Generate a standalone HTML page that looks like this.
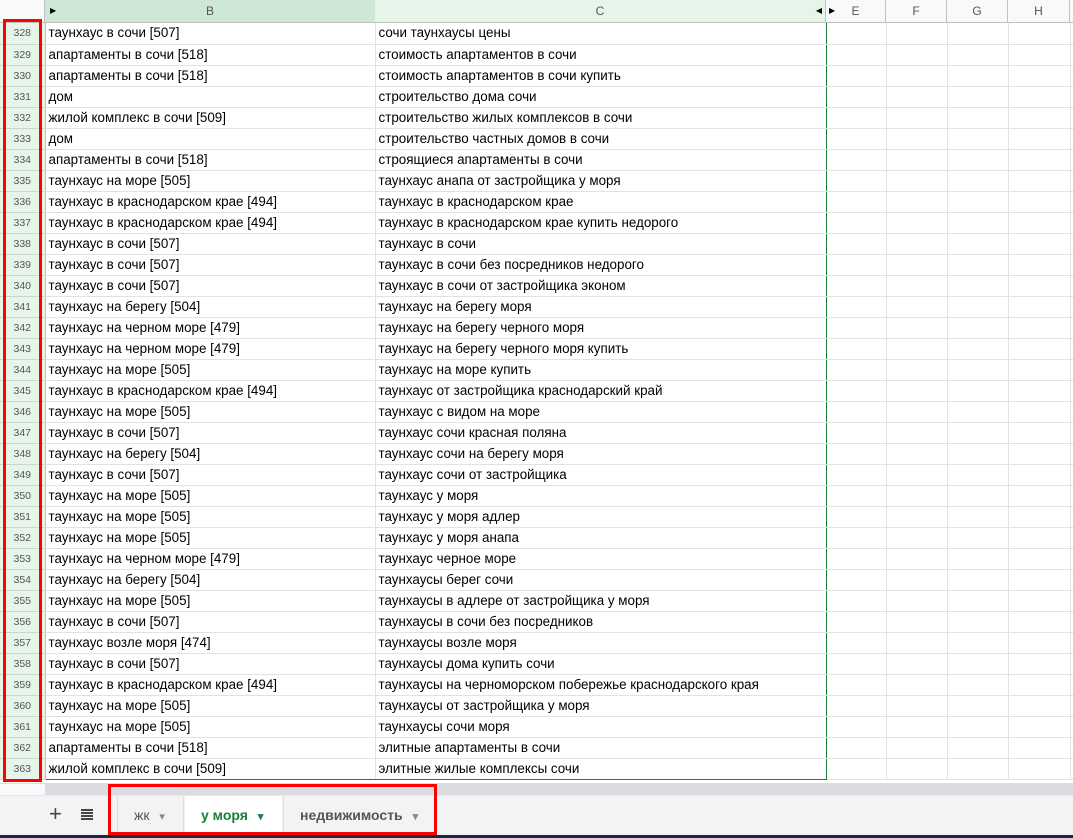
<!DOCTYPE html>
<html><head><meta charset="utf-8"><style>
*{margin:0;padding:0;box-sizing:border-box}
body{width:1073px;height:838px;overflow:hidden;background:#fff;font-family:"Liberation Sans",Arial,sans-serif;position:relative}
.hdr{position:absolute;top:0;height:23px;border-bottom:1px solid #c0c0c0;border-right:1px solid #c0c0c0;background:#f8f9fa;font-size:12px;color:#555;text-align:center;line-height:22px}
table{position:absolute;left:0;top:23px;border-collapse:collapse;table-layout:fixed;width:1080px}
td{height:21px;border-right:1px solid #e2e2e2;border-bottom:1px solid #e2e2e2;font-size:13.4px;color:#000;padding:0 3px;white-space:nowrap;overflow:hidden;line-height:20px}
td.n{background:#e6f4ea;color:#555;font-size:10.5px;text-align:center;border-right:1px solid #c0c0c0;border-bottom:1px solid #c8d8cc}
td.c{border-right:1px solid #188038}
tr.last td.b,tr.last td.c{border-bottom:1px solid #188038}
</style></head><body>
<div class="hdr" style="left:0;width:45px;background:#f8f9fa"></div>
<div class="hdr" style="left:45px;width:331px;background:#cfe7d6">B<span style="position:absolute;left:5px;top:0;font-size:8px;color:#000">▶</span></div>
<div class="hdr" style="left:375px;width:451px;background:#e6f4ea">C<span style="position:absolute;right:3px;top:0;font-size:8px;color:#000">◀</span></div>
<div class="hdr" style="left:826px;width:60px">E<span style="position:absolute;left:3px;top:0;font-size:8px;color:#000">▶</span></div>
<div class="hdr" style="left:886px;width:61px">F</div>
<div class="hdr" style="left:947px;width:61px">G</div>
<div class="hdr" style="left:1008px;width:62px">H</div>
<div class="hdr" style="left:1070px;width:10px"></div>
<table>
<colgroup><col style="width:45px"><col style="width:330px"><col style="width:451px"><col style="width:60px"><col style="width:61px"><col style="width:61px"><col style="width:62px"><col style="width:10px"></colgroup>
<tr><td class="n">328</td><td class="b">таунхаус в сочи [507]</td><td class="c">сочи таунхаусы цены</td><td></td><td></td><td></td><td></td><td></td></tr>
<tr><td class="n">329</td><td class="b">апартаменты в сочи [518]</td><td class="c">стоимость апартаментов в сочи</td><td></td><td></td><td></td><td></td><td></td></tr>
<tr><td class="n">330</td><td class="b">апартаменты в сочи [518]</td><td class="c">стоимость апартаментов в сочи купить</td><td></td><td></td><td></td><td></td><td></td></tr>
<tr><td class="n">331</td><td class="b">дом</td><td class="c">строительство дома сочи</td><td></td><td></td><td></td><td></td><td></td></tr>
<tr><td class="n">332</td><td class="b">жилой комплекс в сочи [509]</td><td class="c">строительство жилых комплексов в сочи</td><td></td><td></td><td></td><td></td><td></td></tr>
<tr><td class="n">333</td><td class="b">дом</td><td class="c">строительство частных домов в сочи</td><td></td><td></td><td></td><td></td><td></td></tr>
<tr><td class="n">334</td><td class="b">апартаменты в сочи [518]</td><td class="c">строящиеся апартаменты в сочи</td><td></td><td></td><td></td><td></td><td></td></tr>
<tr><td class="n">335</td><td class="b">таунхаус на море [505]</td><td class="c">таунхаус анапа от застройщика у моря</td><td></td><td></td><td></td><td></td><td></td></tr>
<tr><td class="n">336</td><td class="b">таунхаус в краснодарском крае [494]</td><td class="c">таунхаус в краснодарском крае</td><td></td><td></td><td></td><td></td><td></td></tr>
<tr><td class="n">337</td><td class="b">таунхаус в краснодарском крае [494]</td><td class="c">таунхаус в краснодарском крае купить недорого</td><td></td><td></td><td></td><td></td><td></td></tr>
<tr><td class="n">338</td><td class="b">таунхаус в сочи [507]</td><td class="c">таунхаус в сочи</td><td></td><td></td><td></td><td></td><td></td></tr>
<tr><td class="n">339</td><td class="b">таунхаус в сочи [507]</td><td class="c">таунхаус в сочи без посредников недорого</td><td></td><td></td><td></td><td></td><td></td></tr>
<tr><td class="n">340</td><td class="b">таунхаус в сочи [507]</td><td class="c">таунхаус в сочи от застройщика эконом</td><td></td><td></td><td></td><td></td><td></td></tr>
<tr><td class="n">341</td><td class="b">таунхаус на берегу [504]</td><td class="c">таунхаус на берегу моря</td><td></td><td></td><td></td><td></td><td></td></tr>
<tr><td class="n">342</td><td class="b">таунхаус на черном море [479]</td><td class="c">таунхаус на берегу черного моря</td><td></td><td></td><td></td><td></td><td></td></tr>
<tr><td class="n">343</td><td class="b">таунхаус на черном море [479]</td><td class="c">таунхаус на берегу черного моря купить</td><td></td><td></td><td></td><td></td><td></td></tr>
<tr><td class="n">344</td><td class="b">таунхаус на море [505]</td><td class="c">таунхаус на море купить</td><td></td><td></td><td></td><td></td><td></td></tr>
<tr><td class="n">345</td><td class="b">таунхаус в краснодарском крае [494]</td><td class="c">таунхаус от застройщика краснодарский край</td><td></td><td></td><td></td><td></td><td></td></tr>
<tr><td class="n">346</td><td class="b">таунхаус на море [505]</td><td class="c">таунхаус с видом на море</td><td></td><td></td><td></td><td></td><td></td></tr>
<tr><td class="n">347</td><td class="b">таунхаус в сочи [507]</td><td class="c">таунхаус сочи красная поляна</td><td></td><td></td><td></td><td></td><td></td></tr>
<tr><td class="n">348</td><td class="b">таунхаус на берегу [504]</td><td class="c">таунхаус сочи на берегу моря</td><td></td><td></td><td></td><td></td><td></td></tr>
<tr><td class="n">349</td><td class="b">таунхаус в сочи [507]</td><td class="c">таунхаус сочи от застройщика</td><td></td><td></td><td></td><td></td><td></td></tr>
<tr><td class="n">350</td><td class="b">таунхаус на море [505]</td><td class="c">таунхаус у моря</td><td></td><td></td><td></td><td></td><td></td></tr>
<tr><td class="n">351</td><td class="b">таунхаус на море [505]</td><td class="c">таунхаус у моря адлер</td><td></td><td></td><td></td><td></td><td></td></tr>
<tr><td class="n">352</td><td class="b">таунхаус на море [505]</td><td class="c">таунхаус у моря анапа</td><td></td><td></td><td></td><td></td><td></td></tr>
<tr><td class="n">353</td><td class="b">таунхаус на черном море [479]</td><td class="c">таунхаус черное море</td><td></td><td></td><td></td><td></td><td></td></tr>
<tr><td class="n">354</td><td class="b">таунхаус на берегу [504]</td><td class="c">таунхаусы берег сочи</td><td></td><td></td><td></td><td></td><td></td></tr>
<tr><td class="n">355</td><td class="b">таунхаус на море [505]</td><td class="c">таунхаусы в адлере от застройщика у моря</td><td></td><td></td><td></td><td></td><td></td></tr>
<tr><td class="n">356</td><td class="b">таунхаус в сочи [507]</td><td class="c">таунхаусы в сочи без посредников</td><td></td><td></td><td></td><td></td><td></td></tr>
<tr><td class="n">357</td><td class="b">таунхаус возле моря [474]</td><td class="c">таунхаусы возле моря</td><td></td><td></td><td></td><td></td><td></td></tr>
<tr><td class="n">358</td><td class="b">таунхаус в сочи [507]</td><td class="c">таунхаусы дома купить сочи</td><td></td><td></td><td></td><td></td><td></td></tr>
<tr><td class="n">359</td><td class="b">таунхаус в краснодарском крае [494]</td><td class="c">таунхаусы на черноморском побережье краснодарского края</td><td></td><td></td><td></td><td></td><td></td></tr>
<tr><td class="n">360</td><td class="b">таунхаус на море [505]</td><td class="c">таунхаусы от застройщика у моря</td><td></td><td></td><td></td><td></td><td></td></tr>
<tr><td class="n">361</td><td class="b">таунхаус на море [505]</td><td class="c">таунхаусы сочи моря</td><td></td><td></td><td></td><td></td><td></td></tr>
<tr><td class="n">362</td><td class="b">апартаменты в сочи [518]</td><td class="c">элитные апартаменты в сочи</td><td></td><td></td><td></td><td></td><td></td></tr>
<tr class="last"><td class="n">363</td><td class="b">жилой комплекс в сочи [509]</td><td class="c">элитные жилые комплексы сочи</td><td></td><td></td><td></td><td></td><td></td></tr>
</table>
<div style="position:absolute;left:0;top:780px;width:1073px;height:4px;background:#fff;border-bottom:1px solid #ddd"></div>
<div style="position:absolute;left:46px;top:784px;width:1027px;height:11px;background:#dadce0"></div>
<div style="position:absolute;left:0;top:784px;width:46px;height:11px;background:#f8f9fa;border-right:1px solid #ddd"></div>
<div style="position:absolute;left:0;top:795px;width:1073px;height:40px;background:#f1f3f4;border-top:1px solid #e8e8e8"></div>
<div style="position:absolute;left:0;top:835px;width:1073px;height:3px;background:#152a45"></div>
<div style="position:absolute;left:49px;top:801px;font-size:22px;color:#444;line-height:26px">+</div>
<div style="position:absolute;left:81px;top:809px;width:12px;height:11px;background:repeating-linear-gradient(#444 0 2px,transparent 2px 3px)"></div>
<div style="position:absolute;left:117px;top:796px;width:67px;height:39px;border-right:1px solid #ddd;border-left:1px solid #ddd;font-size:14px;color:#555;line-height:39px;padding-left:16px">жк <span style="font-size:11px;color:#888;margin-left:6px">▾</span></div>
<div style="position:absolute;left:185px;top:796px;width:97px;height:39px;background:#fff;font-size:14px;font-weight:bold;color:#188038;line-height:39px;padding-left:16px">у моря <span style="font-size:11px;margin-left:6px">▾</span></div>
<div style="position:absolute;left:283px;top:796px;width:150px;height:39px;border-left:1px solid #ddd;font-size:14px;color:#555;line-height:39px;padding-left:16px;font-weight:bold">недвижимость <span style="font-size:11px;color:#888;margin-left:6px">▾</span></div>
<div style="position:absolute;left:3px;top:19px;width:39px;height:763px;border:3px solid #f00"></div>
<div style="position:absolute;left:108px;top:784px;width:329px;height:51px;border:3px solid #f00"></div>
</body></html>
